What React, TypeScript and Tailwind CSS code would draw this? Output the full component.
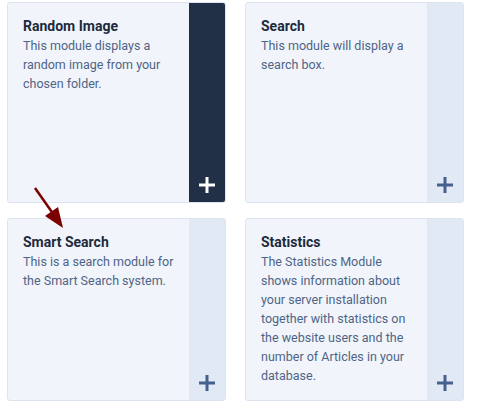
type Mod = { title: string; text: string; active?: boolean };

const mods: Mod[] = [
  { title: "Random Image", text: "This module displays a random image from your chosen folder.", active: true },
  { title: "Search", text: "This module will display a search box." },
  { title: "Smart Search", text: "This is a search module for the Smart Search system." },
  {
    title: "Statistics",
    text: "The Statistics Module shows information about your server installation together with statistics on the website users and the number of Articles in your database.",
  },
];

function PlusIcon() {
  return (
    <svg width="16" height="16" viewBox="0 0 16 16" fill="currentColor">
      <rect x="6.5" y="0" width="3" height="16" />
      <rect x="0" y="6.5" width="16" height="3" />
    </svg>
  );
}

function Card({ m, tall }: { m: Mod; tall: boolean }) {
  return (
    <div
      className={`flex rounded-[3px] border border-[#dde4ef] bg-[#f1f5fb] overflow-hidden ${
        tall ? "h-[201px]" : "h-[183px]"
      }`}
    >
      <div className="flex-1 pl-[15px] pr-2 pt-[14px]">
        <h3 className="text-[14px] leading-[19px] font-bold text-[#1d2a3b]">{m.title}</h3>
        <p className="text-[12.5px] leading-[19px] text-[#4e6486]">{m.text}</p>
      </div>
      <div
        className={`w-[36px] flex items-end justify-center pb-[9px] ${
          m.active ? "bg-[#212f47] text-white" : "bg-[#e1e9f4] text-[#44618d]"
        }`}
      >
        <PlusIcon />
      </div>
    </div>
  );
}

export default function App() {
  return (
    <div
      className="relative w-[480px] h-[408px] bg-white pl-[7px] pt-[2px]"
      style={{ fontFamily: "Roboto, 'Liberation Sans', sans-serif" }}
    >
      <div className="grid grid-cols-[219px_219px] gap-x-[19px] gap-y-[15px]">
        {mods.map((m, i) => (
          <Card key={m.title} m={m} tall={i < 2} />
        ))}
      </div>
      {/* annotation arrow */}
      <svg className="absolute left-[30px] top-[183px]" width="40" height="50" viewBox="0 0 40 50">
        <line x1="5" y1="5" x2="24" y2="32" stroke="#7b0000" strokeWidth="2.5" />
        <polygon points="33,45 15,33 28,24" fill="#7b0000" />
      </svg>
    </div>
  );
}
